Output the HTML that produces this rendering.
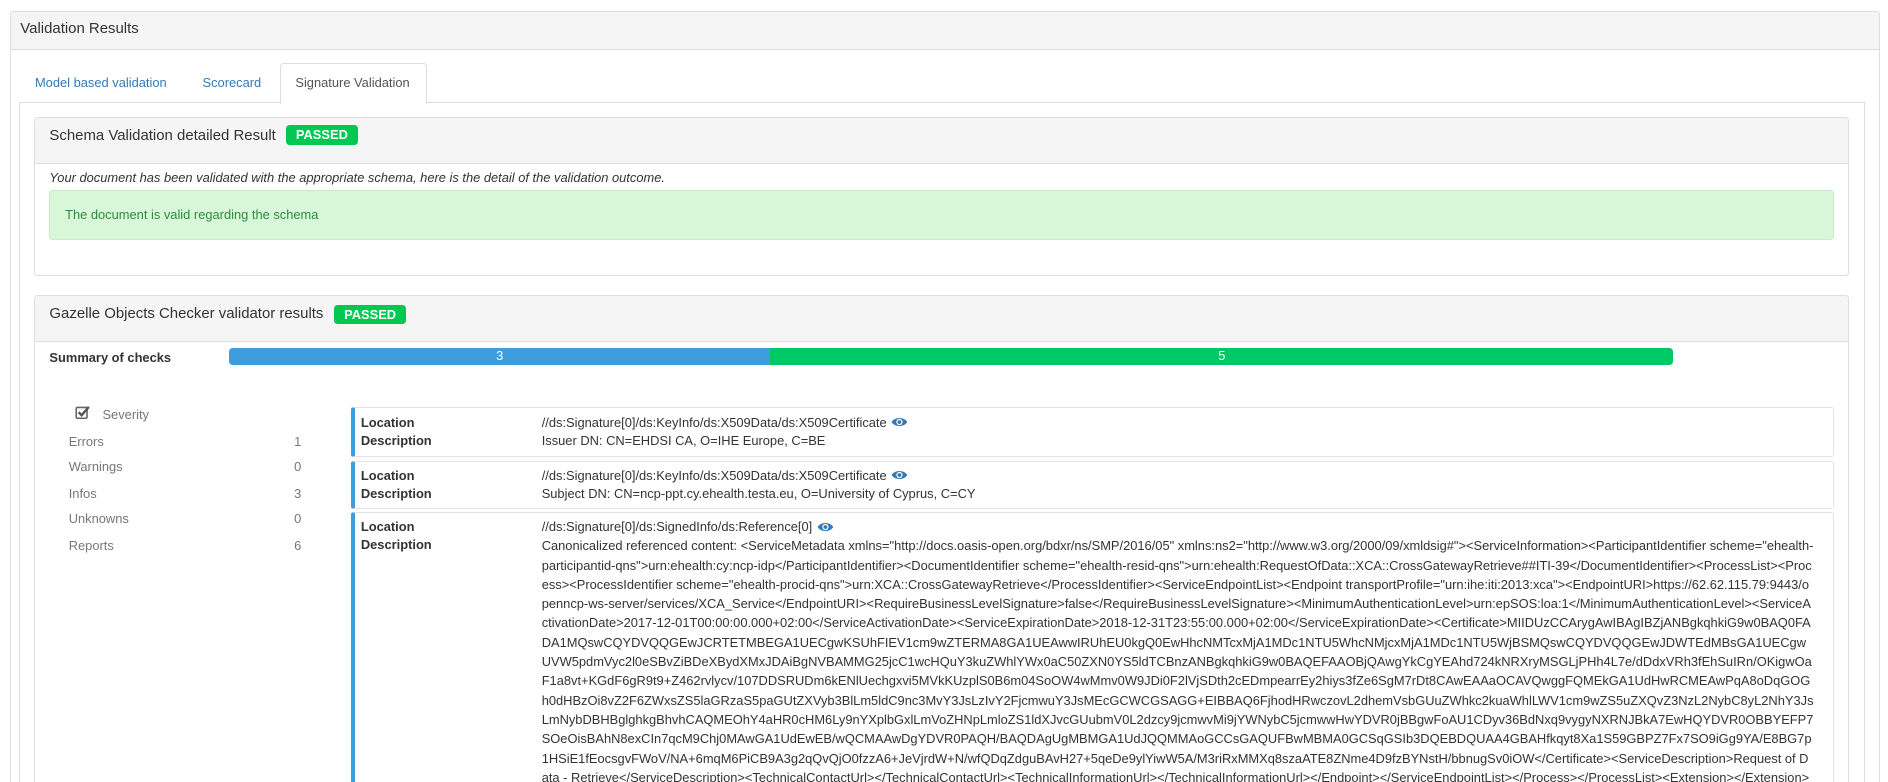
<!DOCTYPE html>
<html><head><meta charset="utf-8">
<style>
html,body{margin:0;padding:0;background:#fff;overflow:hidden;width:1888px;height:782px}
#w{zoom:1.2056;position:relative;width:1566px;height:649px;overflow:hidden;font-family:"Liberation Sans",Arial,sans-serif;font-size:10.7px;color:#333}
.abs{position:absolute}
.panel{position:absolute;border:1px solid #ddd;border-radius:3px;background:#fff;box-sizing:border-box}
.ph{position:absolute;left:0;right:0;top:0;background:#f5f5f5;border-bottom:1px solid #ddd;border-radius:3px 3px 0 0;box-sizing:border-box}
.title{position:absolute;font-size:12.4px;color:#333;white-space:nowrap}
.badge{position:absolute;background:#00c853;color:#fff;font-weight:bold;font-size:10.7px;border-radius:3px;text-align:center;line-height:16px;height:16px}
.tab{position:absolute;color:#337ab7;font-size:10.7px;white-space:nowrap}
.card{position:absolute;left:291px;width:1230px;border:1px solid #e3e3e3;border-left:4px solid #3e9ddd;box-sizing:border-box;border-radius:2px;background:#fff;overflow:hidden}
.lbl{position:absolute;left:5px;font-weight:bold;white-space:nowrap}
.val{position:absolute;left:155px;white-space:nowrap}
.ln{line-height:16px;white-space:nowrap}
.sev{position:absolute;color:#777;white-space:nowrap}
.eye{display:inline-block;vertical-align:-1px;margin-left:4px}
</style></head><body><div id="w">

<div class="panel" style="left:8px;top:9px;width:1551px;height:660px">
  <div class="ph" style="height:32px"></div>
  <div class="title" style="left:8px;top:7px">Validation Results</div>
</div>

<div class="abs" style="left:16px;top:85px;width:1531px;height:600px;border:1px solid #ddd;border-bottom:none;box-sizing:border-box"></div>
<div class="abs" style="left:232px;top:52px;width:122px;height:34px;border:1px solid #ddd;border-bottom:1px solid #fff;border-radius:3px 3px 0 0;background:#fff;box-sizing:border-box"></div>
<div class="tab" style="left:29px;top:62px">Model based validation</div>
<div class="tab" style="left:168px;top:62px">Scorecard</div>
<div class="tab" style="left:245px;top:62px;color:#555">Signature Validation</div>

<div class="panel" style="left:28px;top:97px;width:1506px;height:132px">
  <div class="ph" style="height:38px"></div>
</div>
<div class="title" style="left:41px;top:105px">Schema Validation detailed Result</div>
<div class="badge" style="left:237px;top:104px;width:60px">PASSED</div>
<div class="abs" style="left:41px;top:141px;font-style:italic;white-space:nowrap">Your document has been validated with the appropriate schema, here is the detail of the validation outcome.</div>
<div class="abs" style="left:41px;top:158px;width:1480px;height:41px;background:#d8f6d8;border:1px solid #c6ecc6;border-radius:3px;box-sizing:border-box"></div>
<div class="abs" style="left:54px;top:172px;color:#2e8b3e;white-space:nowrap">The document is valid regarding the schema</div>

<div class="panel" style="left:28px;top:245px;width:1506px;height:500px">
  <div class="ph" style="height:38px"></div>
</div>
<div class="title" style="left:41px;top:253px">Gazelle Objects Checker validator results</div>
<div class="badge" style="left:277px;top:253px;width:60px">PASSED</div>

<div class="abs" style="left:41px;top:290px;font-weight:bold;white-space:nowrap">Summary of checks</div>
<div class="abs" style="left:190px;top:289px;width:449px;height:14px;background:#3e9ddd;border-radius:3px 0 0 3px;color:#fff;text-align:center;line-height:14px">3</div>
<div class="abs" style="left:639px;top:289px;width:749px;height:14px;background:#00c864;border-radius:0 3px 3px 0;color:#fff;text-align:center;line-height:14px">5</div>

<svg class="abs" style="left:62px;top:336px" width="13" height="12" viewBox="0 0 13 12"><rect x="1" y="2" width="9" height="9" fill="none" stroke="#666" stroke-width="1.3" rx="1"/><path d="M3 6 L5.5 8.5 L11.5 1.5" fill="none" stroke="#555" stroke-width="2"/></svg>
<div class="sev" style="left:85px;top:338px">Severity</div>
<div class="sev" style="left:57px;top:360px">Errors</div><div class="sev" style="left:244px;top:360px">1</div>
<div class="sev" style="left:57px;top:381px">Warnings</div><div class="sev" style="left:244px;top:381px">0</div>
<div class="sev" style="left:57px;top:403px">Infos</div><div class="sev" style="left:244px;top:403px">3</div>
<div class="sev" style="left:57px;top:424px">Unknowns</div><div class="sev" style="left:244px;top:424px">0</div>
<div class="sev" style="left:57px;top:446px">Reports</div><div class="sev" style="left:244px;top:446px">6</div>

<div class="card" style="top:338px;height:41px">
  <div class="lbl" style="top:5px">Location</div><div class="lbl" style="top:20px">Description</div>
  <div class="val" style="top:5px">//ds:Signature[0]/ds:KeyInfo/ds:X509Data/ds:X509Certificate<svg class="eye" width="14" height="10" viewBox="0 0 14 10"><path d="M0.5 5 C3 0.5 11 0.5 13.5 5 C11 9.5 3 9.5 0.5 5Z" fill="#337ab7"/><circle cx="7" cy="5" r="2.6" fill="#fff"/><circle cx="7" cy="5" r="1.6" fill="#337ab7"/></svg></div>
  <div class="val" style="top:20px">Issuer DN: CN=EHDSI CA, O=IHE Europe, C=BE</div>
</div>
<div class="card" style="top:382px;height:40px">
  <div class="lbl" style="top:5px">Location</div><div class="lbl" style="top:20px">Description</div>
  <div class="val" style="top:5px">//ds:Signature[0]/ds:KeyInfo/ds:X509Data/ds:X509Certificate<svg class="eye" width="14" height="10" viewBox="0 0 14 10"><path d="M0.5 5 C3 0.5 11 0.5 13.5 5 C11 9.5 3 9.5 0.5 5Z" fill="#337ab7"/><circle cx="7" cy="5" r="2.6" fill="#fff"/><circle cx="7" cy="5" r="1.6" fill="#337ab7"/></svg></div>
  <div class="val" style="top:20px">Subject DN: CN=ncp-ppt.cy.ehealth.testa.eu, O=University of Cyprus, C=CY</div>
</div>
<div class="card" style="top:425px;height:260px">
  <div class="lbl" style="top:5px">Location</div><div class="lbl" style="top:20px">Description</div>
  <div class="val" style="top:5px">//ds:Signature[0]/ds:SignedInfo/ds:Reference[0]<svg class="eye" width="14" height="10" viewBox="0 0 14 10"><path d="M0.5 5 C3 0.5 11 0.5 13.5 5 C11 9.5 3 9.5 0.5 5Z" fill="#337ab7"/><circle cx="7" cy="5" r="2.6" fill="#fff"/><circle cx="7" cy="5" r="1.6" fill="#337ab7"/></svg></div>
  <div class="val" style="top:19px">
<div class="ln">Canonicalized referenced content: &lt;ServiceMetadata xmlns="http://docs.oasis-open.org/bdxr/ns/SMP/2016/05" xmlns:ns2="http://www.w3.org/2000/09/xmldsig#"&gt;&lt;ServiceInformation&gt;&lt;ParticipantIdentifier scheme="ehealth-</div>
<div class="ln">participantid-qns"&gt;urn:ehealth:cy:ncp-idp&lt;/ParticipantIdentifier&gt;&lt;DocumentIdentifier scheme="ehealth-resid-qns"&gt;urn:ehealth:RequestOfData::XCA::CrossGatewayRetrieve##ITI-39&lt;/DocumentIdentifier&gt;&lt;ProcessList&gt;&lt;Proc</div>
<div class="ln">ess&gt;&lt;ProcessIdentifier scheme="ehealth-procid-qns"&gt;urn:XCA::CrossGatewayRetrieve&lt;/ProcessIdentifier&gt;&lt;ServiceEndpointList&gt;&lt;Endpoint transportProfile="urn:ihe:iti:2013:xca"&gt;&lt;EndpointURI&gt;https://62.62.115.79:9443/o</div>
<div class="ln">penncp-ws-server/services/XCA_Service&lt;/EndpointURI&gt;&lt;RequireBusinessLevelSignature&gt;false&lt;/RequireBusinessLevelSignature&gt;&lt;MinimumAuthenticationLevel&gt;urn:epSOS:loa:1&lt;/MinimumAuthenticationLevel&gt;&lt;ServiceA</div>
<div class="ln">ctivationDate&gt;2017-12-01T00:00:00.000+02:00&lt;/ServiceActivationDate&gt;&lt;ServiceExpirationDate&gt;2018-12-31T23:55:00.000+02:00&lt;/ServiceExpirationDate&gt;&lt;Certificate&gt;MIIDUzCCArygAwIBAgIBZjANBgkqhkiG9w0BAQ0FA</div>
<div class="ln">DA1MQswCQYDVQQGEwJCRTETMBEGA1UECgwKSUhFIEV1cm9wZTERMA8GA1UEAwwIRUhEU0kgQ0EwHhcNMTcxMjA1MDc1NTU5WhcNMjcxMjA1MDc1NTU5WjBSMQswCQYDVQQGEwJDWTEdMBsGA1UECgw</div>
<div class="ln">UVW5pdmVyc2l0eSBvZiBDeXBydXMxJDAiBgNVBAMMG25jcC1wcHQuY3kuZWhlYWx0aC50ZXN0YS5ldTCBnzANBgkqhkiG9w0BAQEFAAOBjQAwgYkCgYEAhd724kNRXryMSGLjPHh4L7e/dDdxVRh3fEhSuIRn/OKigwOa</div>
<div class="ln">F1a8vt+KGdF6gR9t9+Z462rvlycv/107DDSRUDm6kENlUechgxvi5MVkKUzplS0B6m04SoOW4wMmv0W9JDi0F2lVjSDth2cEDmpearrEy2hiys3fZe6SgM7rDt8CAwEAAaOCAVQwggFQMEkGA1UdHwRCMEAwPqA8oDqGOG</div>
<div class="ln">h0dHBzOi8vZ2F6ZWxsZS5laGRzaS5paGUtZXVyb3BlLm5ldC9nc3MvY3JsLzIvY2FjcmwuY3JsMEcGCWCGSAGG+EIBBAQ6FjhodHRwczovL2dhemVsbGUuZWhkc2kuaWhlLWV1cm9wZS5uZXQvZ3NzL2NybC8yL2NhY3Js</div>
<div class="ln">LmNybDBHBglghkgBhvhCAQMEOhY4aHR0cHM6Ly9nYXplbGxlLmVoZHNpLmloZS1ldXJvcGUubmV0L2dzcy9jcmwvMi9jYWNybC5jcmwwHwYDVR0jBBgwFoAU1CDyv36BdNxq9vygyNXRNJBkA7EwHQYDVR0OBBYEFP7</div>
<div class="ln">SOeOisBAhN8exCIn7qcM9Chj0MAwGA1UdEwEB/wQCMAAwDgYDVR0PAQH/BAQDAgUgMBMGA1UdJQQMMAoGCCsGAQUFBwMBMA0GCSqGSIb3DQEBDQUAA4GBAHfkqyt8Xa1S59GBPZ7Fx7SO9iGg9YA/E8BG7p</div>
<div class="ln">1HSiE1fEocsgvFWoV/NA+6mqM6PiCB9A3g2qQvQjO0fzzA6+JeVjrdW+N/wfQDqZdguBAvH27+5qeDe9ylYiwW5A/M3riRxMMXq8szaATE8ZNme4D9fzBYNstH/bbnugSv0iOW&lt;/Certificate&gt;&lt;ServiceDescription&gt;Request of D</div>
<div class="ln">ata - Retrieve&lt;/ServiceDescription&gt;&lt;TechnicalContactUrl&gt;&lt;/TechnicalContactUrl&gt;&lt;TechnicalInformationUrl&gt;&lt;/TechnicalInformationUrl&gt;&lt;/Endpoint&gt;&lt;/ServiceEndpointList&gt;&lt;/Process&gt;&lt;/ProcessList&gt;&lt;Extension&gt;&lt;/Extension&gt;</div>
<div class="ln">&lt;/ServiceInformation&gt;&lt;/ServiceMetadata&gt;</div>
  </div>
</div>

</div></body></html>
